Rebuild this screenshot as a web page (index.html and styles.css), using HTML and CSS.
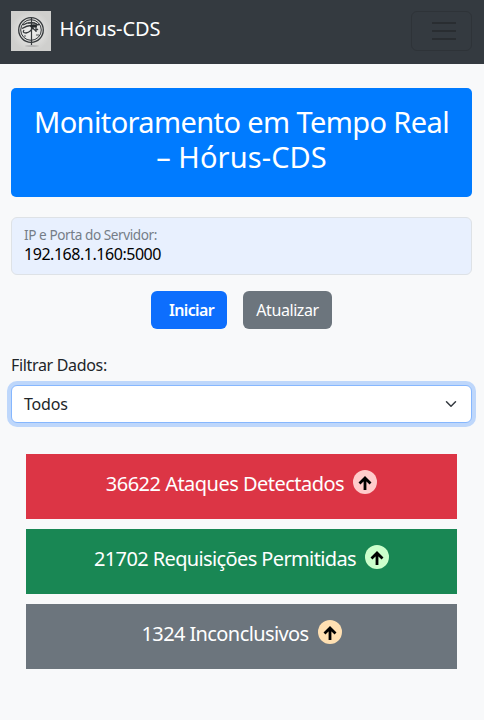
FILE: index.html
```html
<!DOCTYPE html>
<html lang="pt-BR">
<head>
<meta charset="utf-8">
<title>Hórus-CDS</title>
<link rel="stylesheet" href="styles.css">
</head>
<body>
<nav class="navbar">
  <a class="brand">
    <svg class="logo" viewBox="0 0 40 40">
      <defs><radialGradient id="paper"><stop offset="0" stop-color="#f0f0ef"/><stop offset="1" stop-color="#cfcfcd"/></radialGradient></defs>
      <rect width="40" height="40" fill="url(#paper)"/>
      <ellipse cx="21" cy="35" rx="7" ry=".8" fill="#aaa"/>
      <g fill="none" stroke="#34383b">
        <circle cx="20" cy="19" r="12.300" stroke-width="1.300"/>
        <circle cx="20" cy="19" r="10.300" stroke-width="1"/>
        <path d="M12 14q7-4 14-1M11 17.500q5-3 9-3 4 0 8-1M13 19q-2 3 2 3 5-1 7-6M25 15v6M22 17q2 4 5 1" stroke-width="1.300"/>
        <path d="M20.500 7v27M17 12h7" stroke-width="1.200"/>
        <path d="M13 25h2M25 24h3" stroke-width=".8"/>
      </g>
      <ellipse cx="22.500" cy="15" rx="3.500" ry="1.600" fill="#24282b"/>
    </svg>
    <span class="brand-name">Hórus-CDS</span>
  </a>
  <button class="toggler" aria-label="Menu">
    <svg viewBox="0 0 30 30"><path d="M3 7h24M3 15h24M3 23h24" stroke="#292d31" stroke-width="2"/></svg>
  </button>
</nav>
<main class="content">
  <header class="banner"><h1><span class="title-main">Monitoramento em Tempo Real</span><span class="title-name">– Hórus-CDS</span></h1></header>
  <div class="server">
    <div class="server-label"><span>IP e Porta do Servidor:</span></div>
    <div class="server-value"><span>192.168.1.160:5000</span></div>
  </div>
  <div class="actions">
    <button class="btn btn-start"><span>Iniciar</span></button>
    <button class="btn btn-refresh"><span>Atualizar</span></button>
  </div>
  <div class="filter-label"><span>Filtrar Dados:</span></div>
  <div class="select">
    <span>Todos</span>
    <svg viewBox="0 0 16 16"><path d="m2 5 6 6 6-6" fill="none" stroke="#343a40" stroke-width="2" stroke-linecap="round" stroke-linejoin="round"/></svg>
  </div>
  <section class="stats">
    <div class="stat attacks"><span>36622 Ataques Detectados</span><svg viewBox="0 0 24 24"><circle cx="12" cy="12" r="12"/><path d="M12 20V8.500M6.500 13.500 12 8l5.500 5.500"/></svg></div>
    <div class="stat allowed"><span>21702 Requisições Permitidas</span><svg viewBox="0 0 24 24"><circle cx="12" cy="12" r="12"/><path d="M12 20V8.500M6.500 13.500 12 8l5.500 5.500"/></svg></div>
    <div class="stat unclear"><span>1324 Inconclusivos</span><svg viewBox="0 0 24 24"><circle cx="12" cy="12" r="12"/><path d="M12 20V8.500M6.500 13.500 12 8l5.500 5.500"/></svg></div>
  </section>
</main>
</body>
</html>
```
FILE: styles.css
```css
* { box-sizing: border-box; }
body { margin: 0; min-height: 720px; background: #f8f9fa; color: #212529; font: 16px/24px "Noto Sans", sans-serif; white-space: nowrap; }
.navbar { height: 64px; padding: 0 12px 2px 11px; background: #343a40; display: flex; align-items: center; justify-content: space-between; }
.brand { display: flex; align-items: center; gap: 8.5px; color: #fff; font-size: 20px; line-height: 30px; letter-spacing: -.1px; }
.logo { width: 40px; height: 40px; }
.brand-name { margin-top: -4px; }
.toggler { width: 61px; height: 40px; padding: 0 0 0 5px; background: none; border: 1px solid #2e3338; border-radius: 6px; display: flex; align-items: center; justify-content: center; }
.toggler svg { width: 30px; height: 30px; }
.content { padding: 24px 12px 0 11px; }
.banner { height: 109px; padding-top: 16px; background: #007bff; border-radius: 5px; color: #fff; text-align: center; }
.banner h1 { margin: 0; font-size: 29px; line-height: 35px; font-weight: 400; }
.title-main, .title-name { display: block; }
.title-main { letter-spacing: -.61px; }
.title-name { letter-spacing: .1px; }
.server { height: 58px; margin-top: 20px; padding: 7px 12px; border: 1px solid #dee2e6; border-radius: 6px; background: #e8f0fe; }
.server-label { font-size: 13.6px; line-height: 20px; color: #757d87; letter-spacing: -.43px; }
.server-value { line-height: 18px; color: #000; letter-spacing: -.46px; }
.actions { display: flex; justify-content: center; gap: 16px; margin-top: 16px; }
.btn { height: 38px; padding: 0; border: 0; border-radius: 6px; color: #fff; font: 16px/24px "Noto Sans", sans-serif; }
.btn-start { width: 76px; padding-left: 5px; background: #0d6efd; font-weight: 600; letter-spacing: -.65px; }
.btn-refresh { width: 89px; background: #6c757d; letter-spacing: -.42px; }
.filter-label { margin-top: 24px; height: 24px; letter-spacing: -.33px; }
.select { height: 38px; margin-top: 8px; padding: 0 12px; display: flex; align-items: center; justify-content: space-between; background: #fff; border: 1px solid #86b7fe; border-radius: 6px; box-shadow: 0 0 0 4px #bed7fb; letter-spacing: -.2px; }
.select svg { width: 16px; height: 12px; }
.stats { display: grid; gap: 10px; margin: 31px 15px 0; }
.stat { height: 65px; padding-top: 16px; display: flex; justify-content: center; gap: 9px; color: #fff; font-size: 20px; line-height: 28px; }
.stat svg { width: 24px; height: 24px; }
.stat path { fill: none; stroke: #000; stroke-width: 2.8; }
.attacks { background: #dc3545; letter-spacing: -.52px; }
.attacks circle { fill: #ffcccb; }
.allowed { background: #198754; letter-spacing: -.62px; }
.allowed circle { fill: #ccffcc; }
.unclear { background: #6c757d; letter-spacing: -.6px; }
.unclear circle { fill: #ffe0b2; }
```
